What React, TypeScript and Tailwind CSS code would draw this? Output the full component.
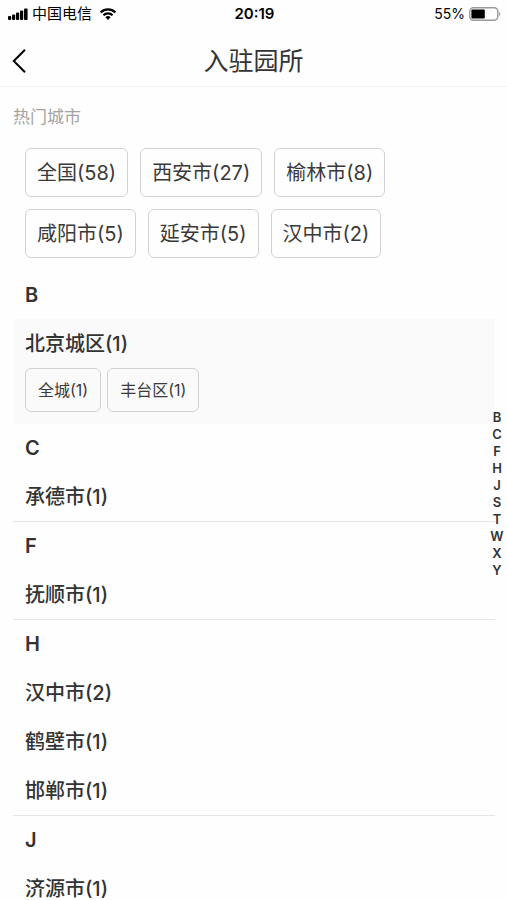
import clsx from "clsx";

type City = { name: string; count: number; areas?: City[] };

const HOT_CITIES: City[] = [
  { name: "全国", count: 58 },
  { name: "西安市", count: 27 },
  { name: "榆林市", count: 8 },
  { name: "咸阳市", count: 5 },
  { name: "延安市", count: 5 },
  { name: "汉中市", count: 2 },
];

const SECTIONS: { letter: string; cities: City[] }[] = [
  {
    letter: "B",
    cities: [
      {
        name: "北京城区",
        count: 1,
        areas: [
          { name: "全城", count: 1 },
          { name: "丰台区", count: 1 },
        ],
      },
    ],
  },
  { letter: "C", cities: [{ name: "承德市", count: 1 }] },
  { letter: "F", cities: [{ name: "抚顺市", count: 1 }] },
  {
    letter: "H",
    cities: [
      { name: "汉中市", count: 2 },
      { name: "鹤壁市", count: 1 },
      { name: "邯郸市", count: 1 },
    ],
  },
  { letter: "J", cities: [{ name: "济源市", count: 1 }] },
];

const LETTERS = ["B", "C", "F", "H", "J", "S", "T", "W", "X", "Y"];

const label = (city: City) => `${city.name}(${city.count})`;

const StatusBar = () => (
  <div className="grid h-7 grid-cols-3 items-center pl-2 pr-1.5 text-black">
    <div className="flex items-center">
      <svg className="h-3 w-5" viewBox="0 0 20 12" aria-hidden="true">
        <rect x="0" y="8" width="3.2" height="4" rx="1" />
        <rect x="4" y="6.5" width="3.2" height="5.5" rx="1" />
        <rect x="8" y="4.5" width="3.2" height="7.5" rx="1" />
        <rect x="12" y="2.5" width="3.2" height="9.5" rx="1" />
        <rect x="16" y="0.5" width="3.6" height="11.5" rx="1" />
      </svg>
      <span className="ml-1 text-[15px] leading-5">中国电信</span>
      <svg
        className="ml-2 h-3 w-4"
        viewBox="0 0 16 12"
        fill="none"
        stroke="currentColor"
        strokeWidth="2.2"
        aria-hidden="true"
      >
        <path d="M0.7 4.4a10.4 10.4 0 0 1 14.6 0" />
        <path d="M3.4 7.2a6.5 6.5 0 0 1 9.2 0" />
        <path d="M8 12L5.4 9.3a3.8 3.8 0 0 1 5.2 0z" fill="currentColor" stroke="none" />
      </svg>
    </div>
    <span className="text-center text-[15px] font-semibold leading-5">20:19</span>
    <div className="flex items-center justify-end gap-1">
      <span className="text-[14px] leading-5">55%</span>
      <svg className="h-3.5 w-8" viewBox="0 0 32 14" aria-hidden="true">
        <rect x="0.8" y="0.8" width="28" height="12.4" rx="3.6" fill="none" stroke="#999" strokeWidth="1.4" />
        <rect x="2.4" y="2.5" width="13.4" height="9" rx="1" />
        <path d="M30.2 4.8v4.4c1.6-.8 1.6-3.6 0-4.4z" fill="#999" />
      </svg>
    </div>
  </div>
);

const CityButton = ({ city, small }: { city: City; small?: boolean }) => (
  <button
    type="button"
    className={clsx(
      "rounded-md border border-[#d2d2d2] text-[#3a3a3a]",
      small ? "h-11 px-3 text-base" : "h-[49px] px-[11px] text-[20px]",
    )}
  >
    {label(city)}
  </button>
);

export default function App() {
  return (
    <div
      lang="zh-CN"
      className="flex h-dvh flex-col bg-[#fefefe] font-['Inter','Noto_Sans_CJK_SC',sans-serif] text-[#333]"
    >
      <StatusBar />
      <header className="grid h-[59px] shrink-0 grid-cols-[48px_1fr_48px] items-center border-b border-[#f3f3f3] pt-2">
        <button type="button" aria-label="返回" className="flex h-full items-center pl-3 text-black">
          <svg
            className="h-6 w-3.5"
            viewBox="0 0 14 24"
            fill="none"
            stroke="currentColor"
            strokeWidth="2"
            aria-hidden="true"
          >
            <path d="M13 0.8L1.8 12L13 23.2" />
          </svg>
        </button>
        <h1 className="text-center text-[25px] leading-9">入驻园所</h1>
      </header>

      <div className="relative min-h-0 flex-1">
        <main className="h-full overflow-y-auto pl-[13px] pr-3 [scrollbar-width:none]">
          <h2 className="flex h-[61px] items-center text-[17px] text-[#a3a3a3]">热门城市</h2>
          <div className="flex flex-wrap gap-3 pb-[13px] pl-3 pr-16">
            {HOT_CITIES.map((city) => (
              <CityButton key={city.name} city={city} />
            ))}
          </div>

          {SECTIONS.map(({ letter, cities }) => (
            <section
              key={letter}
              id={letter}
              className={clsx(!cities[0].areas && "border-b border-[#e6e6e6]")}
            >
              <h3 className="flex h-12 items-center pl-3 text-[20px] font-semibold">{letter}</h3>
              {cities.map((city) => (
                <div key={city.name} className={clsx("pl-3", city.areas && "bg-[#fafafa] pb-3")}>
                  <button type="button" className="flex h-[49px] w-full items-center text-[20px] font-medium">
                    {label(city)}
                  </button>
                  {city.areas && (
                    <div className="flex gap-1.5">
                      {city.areas.map((area) => (
                        <CityButton key={area.name} city={area} small />
                      ))}
                    </div>
                  )}
                </div>
              ))}
            </section>
          ))}
        </main>

        <nav
          aria-label="字母索引"
          className="absolute right-0 top-1/2 flex w-5 -translate-y-1/2 flex-col text-center text-[13px] font-semibold leading-[17px]"
        >
          {LETTERS.map((letter) => (
            <a key={letter} href={`#${letter}`}>
              {letter}
            </a>
          ))}
        </nav>
      </div>
    </div>
  );
}
